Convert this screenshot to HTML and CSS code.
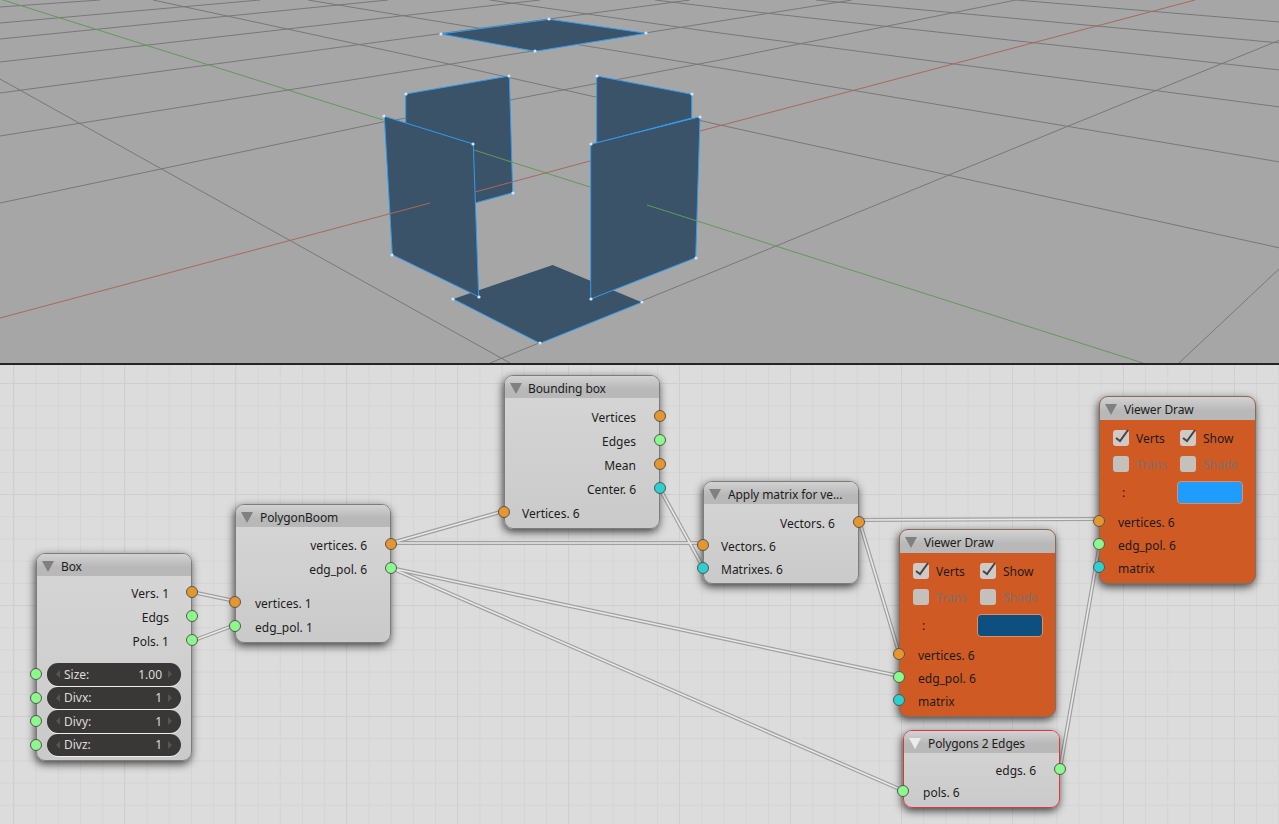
FILE: index.html
```html
<!DOCTYPE html>
<html lang="en">

<head>
    <meta charset="utf8">
    <title>Sverchok nodes</title>
    <link rel="stylesheet" href="styles.css">
</head>

<body>
    <div class="page">
        <!-- 3d view -->
        <svg class="viewport" viewBox="0 0 1279 363">
            <g class="grid-lines">
                <path d="M0 7L100 0M0 23L260 0M0 39L388 0M0 62L540 0M0 93L690 0M0 136L852 0M0 203L383 122L510 100L720 60L1016 0" />
                <path d="M0 79L510 363M153 0L440 62L720 125L1280 248M308 0L720 68L1280 162M490 0L720 33L1280 107M655 0L720 8L1280 70M816 0L1280 43M1016 0L1280 22" />
                <path d="M490 363L720 269L1066 127L1280 40M1179 363L1280 268" />
            </g>
            <polygon class="face" points="441,34 549.3,19.3 646,33.3 535,51.3" />
            <polygon class="face" points="405.7,94 509.3,76 512.7,192.7 476,202.7 405.7,150" />
            <polygon class="face" points="596.7,76 691.7,94.3 691.7,118 596.7,143" />
            <path class="face-bare" d="M453.3 299L552.7 265L641.7 302.3L540 343.3Z" />
            <path class="edge" d="M453.3 299L540 343.3L641.7 302.3" />
            <polygon class="face" points="384.3,116.3 473.3,144 478.7,296.7 392.3,254.7" />
            <polygon class="face" points="700,116.7 695.7,257.7 590.7,299 590.7,144.3" />
            <path class="axis-red" d="M0 318L430 203M475 192L590 161M700 131L1195 0" />
            <path class="axis-green" d="M0 -1L383 120M474 150L590 187M647 205L1143 363" />
            <g class="verts">
                <circle cx="441" cy="34" r="1.6" /><circle cx="549" cy="19" r="1.6" /><circle cx="646" cy="33" r="1.6" /><circle cx="535" cy="51" r="1.6" />
                <circle cx="406" cy="94" r="1.6" /><circle cx="509" cy="76" r="1.6" /><circle cx="513" cy="193" r="1.6" />
                <circle cx="597" cy="76" r="1.6" /><circle cx="692" cy="94" r="1.6" />
                <circle cx="384" cy="116" r="1.6" /><circle cx="473" cy="144" r="1.6" /><circle cx="479" cy="297" r="1.6" /><circle cx="392" cy="255" r="1.6" />
                <circle cx="700" cy="117" r="1.6" /><circle cx="696" cy="258" r="1.6" /><circle cx="591" cy="299" r="1.6" /><circle cx="591" cy="144" r="1.6" />
                <circle cx="453" cy="299" r="1.6" /><circle cx="642" cy="302" r="1.6" /><circle cx="540" cy="343" r="1.6" />
            </g>
        </svg>

        <!-- node editor -->
        <div class="editor">
            <svg class="links" viewBox="0 365 1279 459">
                <defs>
                    <path id="wires" d="M192 592L235 601M192 641L235 625M391 543L504 511M391 543L703 543M391 568L899 676M391 568L904 791M660 489L703 567M859 520L1100 519M859 520L899 653M1060 769L1100 543" />
                </defs>
                <use href="#wires" class="wire-outer" />
                <use href="#wires" class="wire-inner" />
            </svg>

            <div class="node node-box">
                <div class="node-head"><span class="arrow"></span>Box</div>
                <div class="node-body">
                    <div class="row out"><span>Vers. 1</span><i class="socket orange"></i></div>
                    <div class="row out"><span>Edgs</span><i class="socket green"></i></div>
                    <div class="row out"><span>Pols. 1</span><i class="socket green"></i></div>
                    <div class="fields">
                        <div class="field"><i class="socket green"></i><span>Size:</span><span>1.00</span></div>
                        <div class="field"><i class="socket green"></i><span>Divx:</span><span>1</span></div>
                        <div class="field"><i class="socket green"></i><span>Divy:</span><span>1</span></div>
                        <div class="field"><i class="socket green"></i><span>Divz:</span><span>1</span></div>
                    </div>
                </div>
            </div>

            <div class="node node-boom">
                <div class="node-head"><span class="arrow"></span>PolygonBoom</div>
                <div class="node-body">
                    <div class="row out"><span>vertices. 6</span><i class="socket orange"></i></div>
                    <div class="row out"><span>edg_pol. 6</span><i class="socket green"></i></div>
                    <div class="row in spaced"><i class="socket orange"></i><span>vertices. 1</span></div>
                    <div class="row in"><i class="socket green"></i><span>edg_pol. 1</span></div>
                </div>
            </div>

            <div class="node node-bounds">
                <div class="node-head"><span class="arrow"></span>Bounding box</div>
                <div class="node-body">
                    <div class="row out"><span>Vertices</span><i class="socket orange"></i></div>
                    <div class="row out"><span>Edges</span><i class="socket green"></i></div>
                    <div class="row out"><span>Mean</span><i class="socket orange"></i></div>
                    <div class="row out"><span>Center. 6</span><i class="socket teal"></i></div>
                    <div class="row in"><i class="socket orange"></i><span>Vertices. 6</span></div>
                </div>
            </div>

            <div class="node node-matrix">
                <div class="node-head"><span class="arrow"></span>Apply matrix for ve...</div>
                <div class="node-body">
                    <div class="row out"><span>Vectors. 6</span><i class="socket orange"></i></div>
                    <div class="row in"><i class="socket orange"></i><span>Vectors. 6</span></div>
                    <div class="row in"><i class="socket teal"></i><span>Matrixes. 6</span></div>
                </div>
            </div>

            <div class="node viewer node-viewer-a">
                <div class="node-head"><span class="arrow"></span>Viewer Draw</div>
                <div class="node-body">
                    <div class="checks">
                        <div class="check on"><span class="tick"><svg viewBox="0 0 16 16"><path d="M3 8L7 11L15 0" /></svg></span>Verts</div>
                        <div class="check on"><span class="tick"><svg viewBox="0 0 16 16"><path d="M3 8L7 11L15 0" /></svg></span>Show</div>
                        <div class="check off"><span class="tick"></span>Trans</div>
                        <div class="check off"><span class="tick"></span>Shade</div>
                    </div>
                    <div class="colour-row"><span class="colon">:</span><span class="swatch dark-blue"></span></div>
                    <div class="row in"><i class="socket orange"></i><span>vertices. 6</span></div>
                    <div class="row in"><i class="socket green"></i><span>edg_pol. 6</span></div>
                    <div class="row in"><i class="socket teal"></i><span>matrix</span></div>
                </div>
            </div>

            <div class="node viewer node-viewer-b">
                <div class="node-head"><span class="arrow"></span>Viewer Draw</div>
                <div class="node-body">
                    <div class="checks">
                        <div class="check on"><span class="tick"><svg viewBox="0 0 16 16"><path d="M3 8L7 11L15 0" /></svg></span>Verts</div>
                        <div class="check on"><span class="tick"><svg viewBox="0 0 16 16"><path d="M3 8L7 11L15 0" /></svg></span>Show</div>
                        <div class="check off"><span class="tick"></span>Trans</div>
                        <div class="check off"><span class="tick"></span>Shade</div>
                    </div>
                    <div class="colour-row"><span class="colon">:</span><span class="swatch light-blue"></span></div>
                    <div class="row in"><i class="socket orange"></i><span>vertices. 6</span></div>
                    <div class="row in"><i class="socket green"></i><span>edg_pol. 6</span></div>
                    <div class="row in"><i class="socket teal"></i><span>matrix</span></div>
                </div>
            </div>

            <div class="node active node-edges">
                <div class="node-head"><span class="arrow"></span>Polygons 2 Edges</div>
                <div class="node-body">
                    <div class="row out"><span>edgs. 6</span><i class="socket green"></i></div>
                    <div class="row in"><i class="socket green"></i><span>pols. 6</span></div>
                </div>
            </div>
        </div>
    </div>
</body>

</html>
```

FILE: styles.css
```css
* {
    box-sizing: border-box;
    margin: 0;
    padding: 0;
}

body {
    background-color: #dcdcdc;
    font-family: "Noto Sans", "DejaVu Sans", sans-serif;
    font-size: 12px;
    color: #1c1c1c;
    overflow: hidden;
}

.page {
    display: flex;
    flex-direction: column;
    width: 1279px;
    height: 824px;
}

/* 3d view */
.viewport {
    display: block;
    flex: none;
    width: 1279px;
    height: 363px;
    background-color: #a6a6a6;
}

.grid-lines path {
    fill: none;
    stroke: #787878;
    stroke-width: 1;
}

.face {
    fill: #3a5368;
    stroke: #2f9cf0;
    stroke-width: 1;
}

.face-bare {
    fill: #3a5368;
}

.edge {
    fill: none;
    stroke: #2f9cf0;
    stroke-width: 1;
}

.axis-red {
    fill: none;
    stroke: #a8695c;
    stroke-width: 1;
}

.axis-green {
    fill: none;
    stroke: #5f9c58;
    stroke-width: 1;
}

.verts circle {
    fill: #d2e6fa;
}

/* node editor */
.editor {
    position: relative;
    flex: 1;
    border-top: 2px solid #242424;
    background-color: #dcdcdc;
    background-image:
        linear-gradient(to right, #cfcfcf 1px, transparent 1px),
        linear-gradient(to bottom, #cfcfcf 1px, transparent 1px),
        linear-gradient(to right, #d4d4d4 1px, transparent 1px),
        linear-gradient(to bottom, #d4d4d4 1px, transparent 1px);
    background-size: 111px 111px, 111px 111px, 22.2px 22.2px, 22.2px 22.2px;
    background-position: 13px 18px, 13px 18px, 13.5px -4px, 13.5px -4px;
}

.links {
    position: absolute;
    top: 0;
    left: 0;
    width: 1279px;
    height: 459px;
}

.wire-outer {
    fill: none;
    stroke: #a0a0a0;
    stroke-width: 4;
}

.wire-inner {
    fill: none;
    stroke: #e8e8e8;
    stroke-width: 1.6;
}

.node {
    --row: 24px;
    position: absolute;
    width: 156px;
    border: 1px solid #7c7c7c;
    border-radius: 9px;
    background: linear-gradient(#d6d6d6, #cacaca);
    box-shadow: -1px 3px 8px rgba(0, 0, 0, .7);
}

.node-box { left: 36px; top: 188px; }
.node-boom { left: 235px; top: 139px; }
.node-bounds { left: 504px; top: 10px; }
.node-matrix { left: 703px; top: 116px; --row: 23px; }
.node-viewer-a { left: 899px; top: 164px; width: 157px; --row: 23px; }
.node-viewer-b { left: 1099px; top: 31px; width: 157px; --row: 23px; }
.node-edges { left: 903px; top: 365px; width: 157px; --row: 22px; }

.node-head {
    display: flex;
    align-items: center;
    gap: 7px;
    height: 22px;
    padding: 2px 0 0 5px;
    border-radius: 8px 8px 0 0;
    background: linear-gradient(#d2d2d2, #b8b8b8 60%);
    letter-spacing: -.1px;
    white-space: nowrap;
}

.node-bounds .node-head { gap: 6px; }

.arrow {
    width: 0;
    height: 0;
    border-top: 11px solid #808080;
    border-left: 6px solid transparent;
    border-right: 6px solid transparent;
}

.node-body {
    padding: 7px 0 2px;
}

.node-box .node-body { padding: 5px 0 4px; }
.node-boom .node-body { padding: 6px 0 3px; }
.node-bounds .node-body { padding: 7px 0 3px; }
.node-matrix .node-body { padding: 8px 0 2px; }
.node-edges .node-body { padding: 6px 0 4px; }

.row {
    position: relative;
    display: flex;
    align-items: center;
    height: var(--row);
    padding: 0 23px 0 19px;
}

.node-box .row { padding-right: 22px; }
.node-bounds .row,
.node-matrix .row { padding-left: 17px; }
.viewer .row { padding-left: 18px; }

.row.out {
    justify-content: flex-end;
}

.row.spaced {
    margin-top: 10px;
}

.socket {
    position: absolute;
    top: calc(50% - 7.5px);
    width: 12px;
    height: 12px;
    border: 1px solid #555;
    border-radius: 50%;
}

.row.out .socket { right: -7px; }
.row.in .socket { left: -7px; }
.socket.orange { background-color: #e6962e; }
.socket.green { background-color: #8cf98c; }
.socket.teal { background-color: #2dcfcf; }

/* number fields of the box node */
.fields {
    display: flex;
    flex-direction: column;
    gap: 1px;
    margin: 10px 10px 0;
}

.field {
    position: relative;
    display: flex;
    justify-content: space-between;
    align-items: center;
    height: 22.5px;
    padding: 0 19px 0 17px;
    border-radius: 11px;
    background-color: #3a3836;
    color: #dcdcdc;
    box-shadow: 0 1px 0 #efefef;
}

.field::before,
.field::after {
    content: "";
    position: absolute;
    top: calc(50% - 4px);
    border-top: 4px solid transparent;
    border-bottom: 4px solid transparent;
}

.field::before {
    left: 9px;
    border-right: 4px solid #555;
}

.field::after {
    right: 9px;
    border-left: 4px solid #555;
}

.field .socket {
    left: -17px;
    top: calc(50% - 6px);
}

/* viewer draw */
.viewer {
    background: #d05a24;
    border-color: #8a6a58;
}

.viewer .node-head {
    height: 23px;
}

.viewer .node-body {
    padding: 10px 0 3px;
}

.checks {
    display: grid;
    grid-template-columns: 67px 1fr;
    row-gap: 10px;
    padding-left: 13px;
}

.check {
    display: flex;
    align-items: center;
    gap: 7px;
    height: 16px;
}

.check.off {
    color: #7f6f68;
}

.tick {
    width: 16px;
    height: 16px;
    border-radius: 3px;
    background-color: #cfcac6;
}

.check.off .tick {
    background-color: #c4c0bc;
}

.tick svg {
    display: block;
    overflow: visible;
}

.tick path {
    fill: none;
    stroke: #444;
    stroke-width: 2;
}

.colour-row {
    display: flex;
    align-items: center;
    height: 23px;
    margin: 9px 0 7px;
    padding-left: 22px;
}

.colon {
    width: 55px;
}

.swatch {
    width: 66px;
    height: 23px;
    border: 1px solid #dd8f63;
    border-radius: 4px;
}

.swatch.dark-blue { background-color: #0d5080; }
.swatch.light-blue { background-color: #1e9cff; }

.node.active {
    border-color: #d83a3a;
}

.node.active .arrow {
    border-top-color: #ececec;
}
```
